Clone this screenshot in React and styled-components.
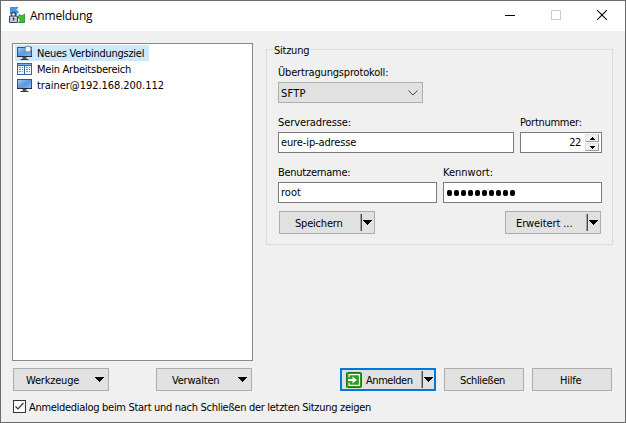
import React from "react";
import styled, { createGlobalStyle } from "styled-components";

const GlobalStyle = createGlobalStyle`
  *, *::before, *::after { box-sizing: border-box; }
  body { margin: 0; overflow: hidden; }
`;

const Window = styled.div`
  width: 626px;
  height: 423px;
  display: flex;
  flex-direction: column;
  border: 1px solid #6a6a6a;
  background: #f0f0f0;
  color: #000;
  font: 11px/16px "DejaVu Sans Condensed", "DejaVu Sans", sans-serif;
  font-stretch: condensed;
`;

const TitleBar = styled.header`
  height: 30px;
  flex: none;
  display: flex;
  align-items: center;
  padding-left: 8px;
  background: #fff;

  > svg { margin-bottom: 2px; }
`;

const Title = styled.h1`
  margin: 0 auto 0 5px;
  font: 400 12px/16px "Open Sans", "Noto Sans", sans-serif;
  letter-spacing: -0.22px;
`;

const WindowButton = styled.button`
  width: 46px;
  height: 30px;
  padding: 0 0 2px;
  border: 0;
  background: none;
  display: grid;
  place-items: center;
`;

const Label = styled.span`
  display: block;
  padding-top: ${(p) => (p.$flat ? 0 : 1)}px;
  margin-bottom: ${(p) => (p.$flat ? 0 : -1)}px;
  white-space: nowrap;
  letter-spacing: ${(p) => p.$spacing || 0}px;
`;

const Content = styled.main`
  display: flex;
  gap: 13px;
  padding: 12px 12px 0 11px;
`;

const SiteList = styled.ul`
  width: 241px;
  height: 318px;
  margin: 0;
  padding: 1px 2px;
  list-style: none;
  border: 1px solid #828790;
  background: #fff;
`;

const Site = styled.li`
  display: flex;
  align-items: center;
  gap: 5px;
  width: max-content;
  height: 16px;
  padding: 0 5px 0 1px;
  background: ${(p) => (p.$selected ? "#cce8ff" : "transparent")};
`;

const Session = styled.fieldset`
  width: 347px;
  height: 203px;
  margin: -1px 0 0;
  padding: 0 11px;
  border: 1px solid #dcdcdc;
  min-width: 0;
`;

const Legend = styled.legend`
  height: 15px;
  padding: 0 1px;
  margin-left: -5px;
  line-height: 15px;
`;

const Fields = styled.div`
  display: grid;
  grid-template-columns: ${(p) => p.$columns};
  gap: 6px;
  height: 50px;
  margin-top: ${(p) => p.$top || 0}px;
`;

const Field = styled.label`
  display: block;
`;

const Control = styled.span`
  height: 21px;
  margin-top: 2px;
  padding: 0 ${(p) => (p.$spin ? 2 : 4)}px 0 2px;
  display: flex;
  align-items: center;
  justify-content: ${(p) => (p.$spin ? "flex-end" : "flex-start")};
  gap: 4px;
  border: 1px solid ${(p) => (p.$select ? "#adadad" : "#7a7a7a")};
  background: ${(p) => (p.$select ? "#e1e1e1" : "#fff")};

  > svg { margin-left: ${(p) => (p.$select ? "auto" : 0)}; }
`;

const Password = styled.span`
  display: flex;
  gap: 2px;
  padding-left: 1px;
`;

const Dot = styled.i`
  width: 5px;
  height: 6px;
  border-radius: 2px;
  background: #000;
`;

const Spinner = styled.span`
  display: grid;
  grid-template-rows: 8px 8px;
  gap: 1px;
`;

const SpinButton = styled.span`
  width: 14px;
  display: grid;
  place-items: center;
  background: #f0f0f0;
  border: 1px solid #e3e3e3;
  border-right-color: #a0a0a0;
  border-bottom-color: #a0a0a0;
`;

const Actions = styled.div`
  display: flex;
  justify-content: space-between;
  padding-left: 1px;
  margin-top: -3px;
`;

const Button = styled.button`
  width: ${(p) => p.$width || 96}px;
  height: 23px;
  flex: none;
  display: flex;
  align-items: center;
  padding: 0 0 0 ${(p) => p.$inset}px;
  border: ${(p) => (p.$primary ? "2px solid #0078d7" : "1px solid #adadad")};
  background: #e1e1e1;
  color: inherit;
  font: inherit;
`;

const Trigger = styled.span`
  display: flex;
  align-items: center;
  gap: 1px;
  margin: 0 ${(p) => p.$end}px 0 auto;
`;

const Divider = styled.i`
  width: 2px;
  height: 17px;
  border-left: 1px solid #a0a0a0;
  border-right: 1px solid #4b4b4b;
`;

const BottomBar = styled.div`
  display: flex;
  margin: 7px 0 0 12px;
`;

const Spacer = styled.span`
  width: ${(p) => p.$width}px;
  flex: none;
`;

const Option = styled.label`
  display: flex;
  align-items: center;
  gap: 3px;
  height: 13px;
  margin: 9px 0 0 12px;
`;

const CheckBox = styled.span`
  width: 13px;
  height: 13px;
  display: grid;
  place-items: center;
  border: 1px solid #333;
  background: #fff;
`;

const CrispSvg = styled.svg`
  display: block;
  flex: none;
  shape-rendering: crispEdges;
`;

const SmoothSvg = styled.svg`
  display: block;
  flex: none;
`;

const Arrow = () => (
  <CrispSvg width="9" height="5"><path d="M0 0h9v1H8v1H7v1H6v1H5v1H4V4H3V3H2V2H1V1H0z" /></CrispSvg>
);

const SpinArrow = ({ down }) => (
  <CrispSvg width="5" height="3"><path d={down ? "M0 0h5v1H4v1H3v1H2V2H1V1H0z" : "M2 0h1v1h1v1h1v1H0V2h1V1h1z"} /></CrispSvg>
);

const AppIcon = () => (
  <SmoothSvg width="16" height="16">
    <path d="M1.5.5H9L7 2.5 9.5 5 7 8 4 5 1.5 7z" fill="#459bf2" stroke="#1f6fc0" strokeWidth=".7" />
    <path d="M15.5 15.5V7L13 9l-2.5-1.5L8.5 10l3 3-2 2.5z" fill="#43bd37" stroke="#248a25" strokeWidth=".8" />
    <path d="M2.5 9.5V7.8a2 2.5 0 0 1 4 0v1.7" fill="none" stroke="#3f4857" strokeWidth="1.4" />
    <rect x=".5" y="9" width="8" height="6.5" rx=".5" fill="#b4bcc6" stroke="#374255" />
    <path d="M1.5 10.5h6M1.5 12.3h6M1.5 14h6" stroke="#e8ecf1" strokeWidth=".7" />
    <path d="M3.8 10.5h1.5v3H3.8z" fill="#273344" />
  </SmoothSvg>
);

const Monitor = ({ star }) => (
  <SmoothSvg width="16" height="16">
    <defs>
      <linearGradient id="screen" x2="1" y2="1">
        <stop stopColor="#a5cff8" /><stop offset=".5" stopColor="#5b97e0" /><stop offset="1" stopColor="#86b9f8" />
      </linearGradient>
    </defs>
    <rect x="1.5" y="2.5" width="14" height="9" fill="url(#screen)" stroke="#47505e" />
    <path d="M1 11.5h15" stroke="#252d38" />
    <path d="M6.5 12h4v2h-4z" fill="#4e5662" />
    <path d="M4.5 14.5h8" stroke="#343b46" />
    {star && (
      <>
        <path d="M12 0l1 1.3 2-.5v2l1 1.4-1 1.2v2l-2-.5-1 1.3-1-1.3-2 .5v-2L8 4.2l1-1.4v-2l2 .5z" fill="#8098ae" />
        <circle cx="12" cy="4.2" r="2.4" fill="#f1f7fd" />
      </>
    )}
  </SmoothSvg>
);

const Workspace = () => (
  <CrispSvg width="16" height="16">
    <rect x="1" y="2" width="15" height="12" fill="#2f67a5" />
    <path d="M2 3h13v1H2z" fill="#79aee8" />
    <path d="M2 5h6v8H2zM9 5h6v8H9z" fill="#eef5ff" />
    <path d="M3 6h2v1H3zM6 6h1v1H6zM3 8h2v1H3zM6 8h1v1H6zM3 10h2v1H3zM6 10h1v1H6zM10 6h2v1h-2zM13 6h1v1h-1zM10 8h2v1h-2zM13 8h1v1h-1zM10 10h2v1h-2zM13 10h1v1h-1z" fill="#7792b2" />
  </CrispSvg>
);

const LoginIcon = () => (
  <SmoothSvg width="16" height="16">
    <rect x=".5" y=".5" width="15" height="15" rx="1" fill="#2b9c20" stroke="#197712" />
    <path d="M3 5.5V2.6h10.4v10.8H3v-2.9" fill="none" stroke="#fff" strokeWidth="1.1" />
    <path d="M2 7h4.5V4.5L11 8l-4.5 3.5V9H2z" fill="#fff" />
  </SmoothSvg>
);

const sites = [
  { name: "Neues Verbindungsziel", icon: <Monitor star />, selected: true, spacing: -0.26 },
  { name: "Mein Arbeitsbereich", icon: <Workspace />, spacing: -0.24 },
  { name: "trainer@192.168.200.112", icon: <Monitor />, spacing: -0.05 },
];

const SplitButton = ({ label, inset, primary, spacing, icon }) => (
  <Button $inset={inset} $primary={primary}>
    {icon}
    <Label $spacing={spacing}>{label}</Label>
    <Trigger $end={primary ? 1 : 2}><Divider /><Arrow /></Trigger>
  </Button>
);

const MenuButton = ({ label, inset, spacing }) => (
  <Button $inset={inset}>
    <Label $spacing={spacing}>{label}</Label>
    <Trigger $end={4}><Arrow /></Trigger>
  </Button>
);

export default function App() {
  return (
    <>
      <GlobalStyle />
      <Window>
        <TitleBar>
          <AppIcon />
          <Title>Anmeldung</Title>
          <WindowButton aria-label="Minimieren"><CrispSvg width="10" height="10"><path d="M0 5h10v1H0z" /></CrispSvg></WindowButton>
          <WindowButton aria-label="Maximieren"><CrispSvg width="10" height="10"><path d="M.5.5h9v9h-9z" fill="none" stroke="#ccc" /></CrispSvg></WindowButton>
          <WindowButton aria-label="Beenden"><SmoothSvg width="10" height="10"><path d="M0 0l10 10M10 0L0 10" stroke="#000" strokeWidth="1.1" /></SmoothSvg></WindowButton>
        </TitleBar>
        <Content>
          <SiteList>
            {sites.map((s) => (
              <Site key={s.name} $selected={s.selected}>{s.icon}<Label $spacing={s.spacing}>{s.name}</Label></Site>
            ))}
          </SiteList>
          <Session>
            <Legend><Label $spacing={-0.25}>Sitzung</Label></Legend>
            <Fields $columns="145px" $top={7}>
              <Field>
                <Label $spacing={-0.18}>Übertragungsprotokoll:</Label>
                <Control $select>
                  <Label $spacing={0.2}>SFTP</Label>
                  <SmoothSvg width="10" height="6"><path d="M.5.5L5 5 9.5.5" fill="none" stroke="#444" /></SmoothSvg>
                </Control>
              </Field>
            </Fields>
            <Fields $columns="236px 82px">
              <Field><Label $spacing={-0.1}>Serveradresse:</Label><Control><Label $flat $spacing={-0.12}>eure-ip-adresse</Label></Control></Field>
              <Field>
                <Label $spacing={-0.27}>Portnummer:</Label>
                <Control $spin>
                  <Label $flat $spacing={-0.4}>22</Label>
                  <Spinner><SpinButton><SpinArrow /></SpinButton><SpinButton><SpinArrow down /></SpinButton></Spinner>
                </Control>
              </Field>
            </Fields>
            <Fields $columns="159px 159px">
              <Field><Label $spacing={-0.27}>Benutzername:</Label><Control><Label $flat>root</Label></Control></Field>
              <Field>
                <Label>Kennwort:</Label>
                <Control><Password>{Array.from({ length: 10 }, (_, i) => <Dot key={i} />)}</Password></Control>
              </Field>
            </Fields>
            <Actions>
              <SplitButton label="Speichern" inset={15} spacing={-0.2} />
              <SplitButton label="Erweitert ..." inset={10} spacing={-0.1} />
            </Actions>
          </Session>
        </Content>
        <BottomBar>
          <MenuButton label="Werkzeuge" inset={12} spacing={-0.2} />
          <Spacer $width={47} />
          <MenuButton label="Verwalten" inset={15} spacing={-0.2} />
          <Spacer $width={88} />
          <SplitButton label="Anmelden" inset={4} primary spacing={-0.45} icon={<><LoginIcon /><Spacer $width={4} /></>} />
          <Spacer $width={8} />
          <Button $width={80} $inset={15}><Label $spacing={-0.35}>Schließen</Label></Button>
          <Spacer $width={8} />
          <Button $width={80} $inset={27}><Label $spacing={-0.2}>Hilfe</Label></Button>
        </BottomBar>
        <Option>
          <CheckBox><SmoothSvg width="11" height="11"><path d="M1.5 5.5L4 8l5.5-6" fill="none" stroke="#333" strokeWidth="1.2" /></SmoothSvg></CheckBox>
          <Label $spacing={-0.295}>Anmeldedialog beim Start und nach Schließen der letzten Sitzung zeigen</Label>
        </Option>
      </Window>
    </>
  );
}
